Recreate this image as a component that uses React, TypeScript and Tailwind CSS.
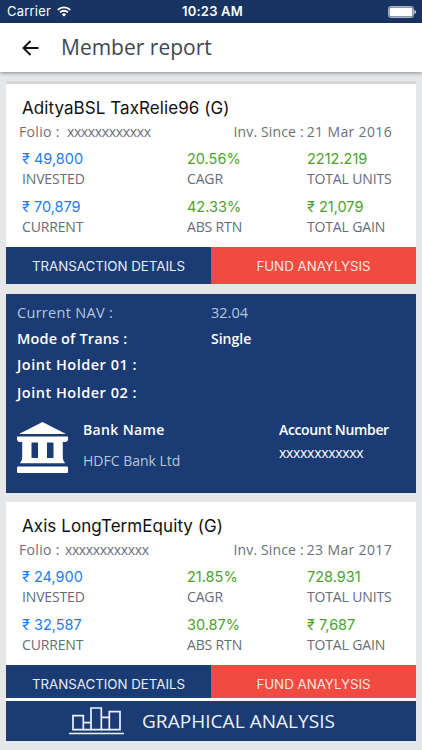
import { clsx } from 'clsx';

const funds = [
  {
    name: 'AdityaBSL TaxRelie96 (G)',
    folio: 'xxxxxxxxxxxx',
    folioGap: 'ml-[7px]',
    since: '21 Mar 2016',
    stats: [
      { value: '₹ 49,800', label: 'INVESTED', blue: true },
      { value: '20.56%', label: 'CAGR' },
      { value: '2212.219', label: 'TOTAL UNITS' },
      { value: '₹ 70,879', label: 'CURRENT', blue: true },
      { value: '42.33%', label: 'ABS RTN' },
      { value: '₹ 21,079', label: 'TOTAL GAIN' },
    ],
  },
  {
    name: 'Axis LongTermEquity (G)',
    folio: 'xxxxxxxxxxxx',
    folioGap: 'ml-[5px]',
    since: '23 Mar 2017',
    stats: [
      { value: '₹ 24,900', label: 'INVESTED', blue: true },
      { value: '21.85%', label: 'CAGR' },
      { value: '728.931', label: 'TOTAL UNITS' },
      { value: '₹ 32,587', label: 'CURRENT', blue: true },
      { value: '30.87%', label: 'ABS RTN' },
      { value: '₹ 7,687', label: 'TOTAL GAIN' },
    ],
  },
];

export default function App() {
  return (
    <div className="flex h-[750px] w-[422px] flex-col overflow-hidden bg-[#e6e7e9] font-['Open_Sans',sans-serif]">
      <StatusBar />
      <Header />

      <main className="flex flex-1 flex-col overflow-hidden px-1.5 pt-[9px]">
        <div className="h-[3px] shrink-0 bg-[#d7d8da]" />
        <FundCard fund={funds[0]} />
        <DetailsPanel />
        <FundCard fund={funds[1]} />
      </main>

      <footer className="px-1.5 pb-[9px]">
        <button className="flex h-[43px] w-full items-center border-t-[3px] border-white bg-[#1a3b73] pl-[63px] text-[#eef2fa]">
          <ChartIcon />
          <span className="ml-[18px] text-[19px] leading-6 tracking-[0.05px] whitespace-nowrap">GRAPHICAL ANALYSIS</span>
        </button>
      </footer>
    </div>
  );
}

function StatusBar() {
  return (
    <div className="grid h-[23px] shrink-0 grid-cols-3 items-center bg-[#183462] pr-[6px] pl-[7px] font-['Inter',sans-serif] text-[13px] text-white">
      <div className="flex items-center gap-[6px]">
        <span className="tracking-[0.2px]">Carrier</span>
        <svg width="14" height="11" viewBox="0 0 14 11" fill="none" stroke="currentColor" strokeWidth="1.9">
          <path d="M0.8 3.9a8.8 8.8 0 0 1 12.4 0" />
          <path d="M3.1 6.4a5.5 5.5 0 0 1 7.8 0" />
          <path d="M7 10.6 4.8 8.4a3.1 3.1 0 0 1 4.4 0z" fill="currentColor" stroke="none" />
        </svg>
      </div>
      <span className="pl-[2px] text-center font-semibold tracking-[0.2px] whitespace-nowrap">10:23 AM</span>
      <svg className="justify-self-end" width="28" height="12" viewBox="0 0 28 12">
        <rect x="0.5" y="0.5" width="25" height="11" rx="2" fill="#183462" stroke="#a9b5c9" />
        <rect x="1.5" y="1.5" width="23" height="9" rx="1" fill="#fff" />
        <path d="M26.5 4v4c.9-.3 1.3-1 1.3-2s-.4-1.700-1.300-2z" fill="#fff" />
      </svg>
    </div>
  );
}

function Header() {
  return (
    <header className="z-10 flex h-[49px] shrink-0 items-center bg-white pl-[22px] shadow-[0_1px_4px_rgba(0,0,0,0.4)]">
      <svg width="17" height="16" viewBox="0 0 17 16" fill="none" stroke="#111" strokeWidth="1.9">
        <path d="M16.500 8H1.800M8.500 1 1.500 8l7 7" />
      </svg>
      <h1 className="ml-[22px] text-[21px] text-[#3c4852]">Member report</h1>
    </header>
  );
}

function FundCard({ fund }: { fund: (typeof funds)[number] }) {
  return (
    <section className="shrink-0 bg-white pt-[13px]">
      <h2 className="pl-4 font-['Inter',sans-serif] text-[17px] leading-[22px] tracking-[0.07px] text-[#111]">{fund.name}</h2>
      <div className="flex h-6 items-center pr-6 pl-[13px] text-[14px] tracking-[0.35px] text-[#69717b]">
        <span>Folio :</span>
        <span className={clsx('tracking-[-0.35px]', fund.folioGap)}>{fund.folio}</span>
        <span className="ml-auto tracking-[0.15px]">Inv. Since :</span>
        <span className="ml-[3px]">{fund.since}</span>
      </div>
      <div className="mt-[6px] grid grid-cols-[165px_120px_1fr] gap-y-2 pl-4">
        {fund.stats.map((stat) => (
          <div key={stat.label}>
            <p
              className={clsx(
                "font-['Inter',sans-serif] text-[14.5px] leading-5",
                stat.blue ? 'text-[#1f7cf0]' : 'text-[#4ca32c]'
              )}
            >
              {stat.value}
            </p>
            <p className="text-[14px] leading-5 tracking-[-0.15px] text-[#656d77]">{stat.label}</p>
          </div>
        ))}
      </div>
      <div className="mt-[10px] grid h-[37px] grid-cols-2 font-['Inter',sans-serif] text-[13.3px]">
        <button className="bg-[#1a3b73] pt-[2px] text-[#e8eefa]">TRANSACTION DETAILS</button>
        <button className="bg-[#f04a41] pt-[2px] text-[#fde5e2]">FUND ANAYLYSIS</button>
      </div>
    </section>
  );
}

function DetailsPanel() {
  return (
    <section className="mt-[10px] mb-[9px] h-[199px] shrink-0 bg-[#1a3b73] pt-[6px] pl-[11px] text-[14px] text-white">
      <dl className="grid grid-cols-[194px_1fr] grid-rows-[26px_25px_28px_27px] items-center text-[14.5px] font-semibold">
        <dt className="font-normal tracking-[0.3px] text-[#b9c6de]">Current NAV :</dt>
        <dd className="font-normal text-[#b9c6de]">32.04</dd>
        <dt className="tracking-[0.15px]">Mode of Trans :</dt>
        <dd className="text-[14px]">Single</dd>
        <dt className="tracking-[0.5px]">Joint Holder 01 :</dt>
        <dd />
        <dt className="tracking-[0.5px]">Joint Holder 02 :</dt>
        <dd />
      </dl>
      <div className="mt-3 flex">
        <BankIcon />
        <div className="ml-[15px] w-[196px]">
          <p className="leading-6 font-semibold tracking-[0.35px]">Bank Name</p>
          <p className="mt-[7px] leading-6 text-[#b9c6de]">HDFC Bank Ltd</p>
        </div>
        <div>
          <p className="leading-6 font-semibold tracking-[-0.35px]">Account Number</p>
          <p className="leading-[22px] tracking-[-0.3px]">xxxxxxxxxxxx</p>
        </div>
      </div>
    </section>
  );
}

function BankIcon() {
  return (
    <svg className="mt-1 shrink-0" width="51" height="51" viewBox="0 0 51 51" fill="#fff">
      <path d="M25.500 0 49 12H2z" />
      <path d="M0 14.500h51v3.300q-.5 2.200-3 2.200h-2.200v16q.3 3 2.400 5.300H2.800Q4.900 39 5.200 36V20H3q-2.500 0-3-2.200zM14.500 20.500V36H21V20.500zM30 20.500V36h6.500V20.500z" fillRule="evenodd" />
      <rect y="44.500" width="51" height="6.500" rx="1" />
    </svg>
  );
}

function ChartIcon() {
  return (
    <svg width="55" height="28" viewBox="0 0 55 28" fill="none" stroke="currentColor" strokeWidth="1.700">
      <path d="M4 8.700h10.300v14H4zM22 1h10.300v21.700H22zM40.300 4.700H51v18H40.300z" />
      <path d="M14.300 15.700H22M14.300 22.700H22M32.300 10.300h8M32.300 22.700h8M0 26.500h55" />
    </svg>
  );
}
